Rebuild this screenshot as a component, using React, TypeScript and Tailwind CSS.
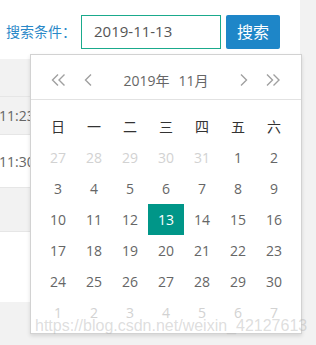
import React from 'react';

const FONT = "font-['Open_Sans','Noto_Sans_CJK_SC',sans-serif]";

const weekDays = ['日', '一', '二', '三', '四', '五', '六'];

type Day = { n: number; other?: boolean };

const days: Day[] = [
    ...[27, 28, 29, 30, 31].map((n) => ({ n, other: true })),
    ...Array.from({ length: 30 }, (_, i) => ({ n: i + 1 })),
    ...[1, 2, 3, 4, 5, 6, 7].map((n) => ({ n, other: true })),
];

function Chevron({ dir, double }: { dir: 'left' | 'right'; double?: boolean }) {
    const left = dir === 'left';
    const one = left ? '7,0.5 1.5,6 7,11.5' : '1,0.5 6.5,6 1,11.5';
    const two = left ? '13.5,0.5 8,6 13.5,11.5' : '7.5,0.5 13,6 7.5,11.5';
    return (
        <svg width={double ? 15 : 8} height={12} viewBox={double ? '0 0 15 12' : '0 0 8 12'} fill="none">
            <polyline points={double && !left ? two : one} stroke="#a0a0a0" strokeWidth={1.4} />
            {double && <polyline points={left ? two : one} stroke="#a0a0a0" strokeWidth={1.4} />}
        </svg>
    );
}

function Calendar() {
    return (
        <div className="absolute left-[30px] top-[54px] w-[272px] bg-white border border-[#d2d2d2] shadow-[0_2px_4px_rgba(0,0,0,0.12)]">
            <div className="flex items-center h-[45px] px-[20px] pt-[6px] border-b border-[#e2e2e2]">
                <Chevron dir="left" double />
                <div className="ml-[18px]">
                    <Chevron dir="left" />
                </div>
                <div className="flex-1 flex justify-center gap-[9px] text-[14px] text-[#666]">
                    <span>2019年</span>
                    <span>11月</span>
                </div>
                <div className="mr-[18px]">
                    <Chevron dir="right" />
                </div>
                <Chevron dir="right" double />
            </div>
            <div className="px-[9px] pt-[11px] pb-[5px]">
                <div className="grid grid-cols-7">
                    {weekDays.map((w) => (
                        <div key={w} className="w-[36px] h-[31px] flex items-center justify-center text-[14px] text-[#333]">
                            {w}
                        </div>
                    ))}
                    {days.map((d, i) => {
                        const selected = !d.other && d.n === 13;
                        return (
                            <div
                                key={i}
                                className={
                                    'w-[36px] h-[31px] flex items-center justify-center text-[14px] ' +
                                    (selected ? 'bg-[#009688] text-white' : d.other ? 'text-[#d2d2d2]' : 'text-[#666]')
                                }
                            >
                                {d.n}
                            </div>
                        );
                    })}
                </div>
            </div>
        </div>
    );
}

export default function App() {
    return (
        <div className={`relative w-[316px] h-[345px] overflow-hidden bg-[#f2f2f2] ${FONT}`}>
            <div className="w-[300px] h-[302px] bg-white flex flex-col">
                <div className="h-[59px] flex items-center pl-[6px] pt-[4px]">
                    <span className="text-[14px] text-[#2a88c8]">搜索条件：</span>
                    <div className="ml-[5px] w-[140px] h-[34px] border border-[#1aaa8c] flex items-center pl-[12px] text-[15px] text-[#555]">
                        2019-11-13
                    </div>
                    <button className="ml-[5px] w-[54px] h-[34px] rounded-[2px] bg-[#1e86c8] text-white text-[16px]">
                        搜索
                    </button>
                </div>
                <div className="flex flex-col text-[14px] text-[#666]">
                    <div className="h-[38px] bg-[#f2f2f2] border-b border-[#e6e6e6]" />
                    <div className="h-[38px] bg-[#f2f2f2] border-b border-[#e6e6e6] flex items-center -ml-[1px]">
                        11:23
                    </div>
                    <div className="h-[53px] border-b border-[#e6e6e6] flex items-center -ml-[1px]">11:30</div>
                    <div className="h-[44px] bg-[#f2f2f2] border-b border-[#e6e6e6]" />
                </div>
            </div>
            <Calendar />
            <div className="absolute left-[35px] top-[316px] text-[16px] leading-[20px] font-['Liberation_Sans',Arial,sans-serif] text-[rgba(170,170,170,0.4)] whitespace-nowrap">
                https://blog.csdn.net/weixin_42127613
            </div>
        </div>
    );
}
